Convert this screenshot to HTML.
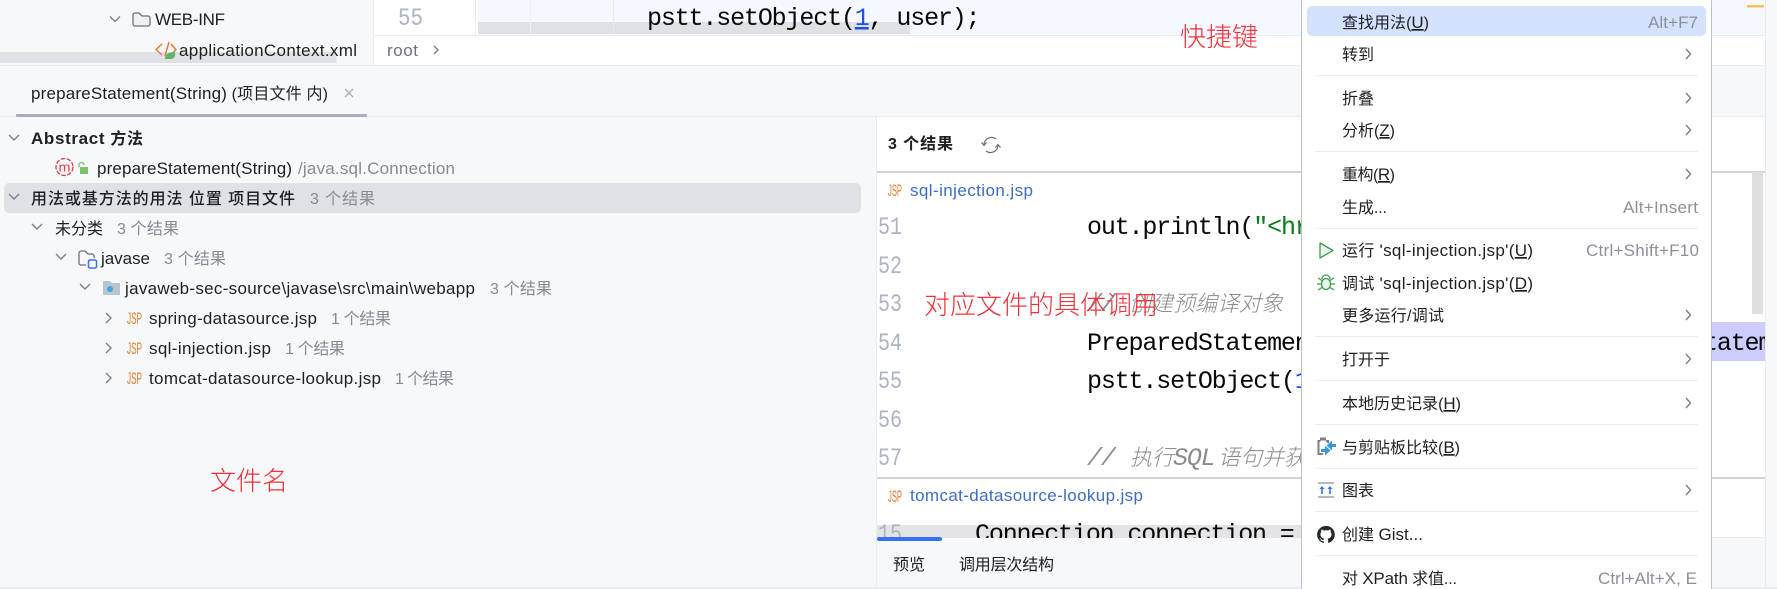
<!DOCTYPE html>
<html><head><meta charset="utf-8"><style>
html,body{margin:0;padding:0;background:#f7f8fa;width:1777px;height:589px;overflow:hidden}
svg{display:block}
text{font-family:"Liberation Sans","Noto Sans CJK SC",sans-serif;font-size:16px;fill:#1e1f22;white-space:pre}
.e{font-size:17px}
.g{fill:#868a91}
.s{fill:#8d909b;font-size:17px}
.b{font-weight:bold}
.m{font-family:"Liberation Mono","Noto Sans CJK SC",monospace;font-size:25px;fill:#080808;letter-spacing:-1.15px}
.n{font-family:"Liberation Mono",monospace;font-size:25px;fill:#aeb3c2}
.c{font-family:"Noto Sans CJK SC",sans-serif;font-size:22px;fill:#8c8c8c;font-style:italic;font-weight:300}
.cm{font-family:"Liberation Mono",monospace;font-size:25px;fill:#8c8c8c;font-style:italic;letter-spacing:-1.15px}
.r{font-family:"Noto Sans CJK SC",sans-serif;font-weight:300;fill:#f0303a;font-size:26px}
.j{font-size:17px;fill:#e8792c;font-weight:normal}
.l{fill:#3f6cc4}
.ch{fill:none;stroke:#7c7f88;stroke-width:1.4}
</style></head><body>
<svg width="1777" height="589" viewBox="0 0 1777 589" xmlns="http://www.w3.org/2000/svg">
<defs>
<clipPath id="c15"><rect x="877" y="515" width="425" height="23"/></clipPath>
</defs>
<rect width="1777" height="589" fill="#f7f8fa"/>
<!-- top editor -->
<rect x="374" y="0" width="1403" height="65" fill="#fff"/>
<rect x="478" y="0" width="1287" height="35" fill="#f5f8fe"/>
<rect x="373" y="0" width="1" height="65" fill="#ebecf0"/>
<rect x="475" y="0" width="1" height="35" fill="#ebecf0"/>
<rect x="374" y="35" width="1391" height="1" fill="#ebecf0"/>
<rect x="0" y="65" width="1777" height="1" fill="#ebecf0"/>
<rect x="0" y="52" width="337" height="11" fill="#dfe1e5"/>
<rect x="336" y="52" width="1" height="12" fill="#eceef1"/>
<rect x="478" y="22" width="432" height="12" fill="#dfe1e5"/>
<rect x="530" y="0" width="1" height="35" fill="#eef0f5"/>
<rect x="613" y="0" width="1" height="35" fill="#e6e9f0"/>
<path d="M110 16.500l5 5 5-5" class="ch"/>
<path d="M133 15a2 2 0 0 1 2-2h4l3 3h6a2 2 0 0 1 2 2v6a2 2 0 0 1-2 2h-13a2 2 0 0 1-2-2z" fill="#f0f1f3" stroke="#6c707e" stroke-width="1.3"/>
<text class="e" x="155" y="25" textLength="70">WEB-INF</text>
<path d="M162 44l-6 5.500 6 5.500M171 44l5 5.500-5 5.500" fill="none" stroke="#e8792c" stroke-width="1.400"/>
<path d="M169 42l-4 14" stroke="#e8792c" stroke-width="1.400"/>
<path d="M165 59q0-7 10-7q1 7-5 7z" fill="#62b36b"/>
<text class="e" x="179" y="56" textLength="178">applicationContext.xml</text>
<text class="n" x="398" y="25" textLength="25" lengthAdjust="spacingAndGlyphs">55</text>
<text class="m" x="647" y="25">pstt.setObject(<tspan fill="#1750eb" text-decoration="underline">1</tspan>, user);</text>
<text class="e" x="387" y="56" style="fill:#6c707e" textLength="31">root</text>
<path d="M434 46l4 4-4 4" class="ch" stroke-width="1"/>
<!-- tab -->
<text x="31" y="99" textLength="297"><tspan class="e">prepareStatement(String)</tspan> (项目文件 内)</text>
<path d="M345 89l8 8M353 89l-8 8" stroke="#a8adbd" stroke-width="1.300"/>
<rect x="0" y="116" width="1777" height="1" fill="#ebecf0"/>
<rect x="16" y="114" width="351" height="3" rx="1" fill="#a8adbd"/>
<!-- tree -->
<path d="M9 135l5 5 5-5" class="ch"/>
<text class="b" x="31" y="144" textLength="112"><tspan class="e">Abstract</tspan> 方法</text>
<circle cx="64.500" cy="167" r="8.500" fill="none" stroke="#db3b4b" stroke-width="1.300" stroke-dasharray="4.500 1.500"/>
<text x="58.500" y="171.500" style="fill:#db3b4b;font-size:13px" textLength="12" lengthAdjust="spacingAndGlyphs">m</text>
<rect x="80" y="167" width="8" height="7" fill="#7fc06d"/>
<path d="M79 167v-2a2.500 2.500 0 0 1 5 0" fill="none" stroke="#7fc06d" stroke-width="1.300"/>
<text class="e" x="97" y="174" textLength="195">prepareStatement(String)</text>
<text class="g e" x="298" y="174" textLength="157">/java.sql.Connection</text>
<rect x="4" y="183" width="857" height="30" rx="5" fill="#dfe1e5"/>
<path d="M9 194l5 5 5-5" class="ch"/>
<text x="31" y="204" textLength="264" style="font-weight:500">用法或基方法的用法 位置 项目文件</text>
<text class="g" x="310" y="204" textLength="65">3 个结果</text>
<path d="M32 224l5 5 5-5" class="ch"/>
<text x="55" y="234" textLength="48">未分类</text>
<text class="g" x="117" y="234" textLength="62">3 个结果</text>
<path d="M56 254l5 5 5-5" class="ch"/>
<path d="M79 253a2 2 0 0 1 2-2h4l3 3h4a2 2 0 0 1 2 2v2M86 265h-5a2 2 0 0 1-2-2v-10" fill="none" stroke="#6c707e" stroke-width="1.300"/>
<rect x="88.500" y="260" width="8" height="8" rx="1.500" fill="#fff" stroke="#3574f0" stroke-width="1.500"/>
<text class="e" x="101" y="264" textLength="49">javase</text>
<text class="g" x="164" y="264" textLength="62">3 个结果</text>
<path d="M80 284l5 5 5-5" class="ch"/>
<path d="M103 281h7l2 2h8v12h-17z" fill="#b8c5cd"/>
<circle cx="110" cy="289" r="3" fill="#3fa5e0"/>
<text class="e" x="125" y="294" textLength="350">javaweb-sec-source\javase\src\main\webapp</text>
<text class="g" x="490" y="294" textLength="62">3 个结果</text>
<path d="M106 313l5 5-5 5" class="ch"/>
<text class="j" x="127" y="324" textLength="15" lengthAdjust="spacingAndGlyphs">JSP</text>
<text class="e" x="149" y="324" textLength="168">spring-datasource.jsp</text>
<text class="g" x="331" y="324" textLength="60">1 个结果</text>
<path d="M106 343l5 5-5 5" class="ch"/>
<text class="j" x="127" y="354" textLength="15" lengthAdjust="spacingAndGlyphs">JSP</text>
<text class="e" x="149" y="354" textLength="122">sql-injection.jsp</text>
<text class="g" x="285" y="354" textLength="60">1 个结果</text>
<path d="M106 373l5 5-5 5" class="ch"/>
<text class="j" x="127" y="384" textLength="15" lengthAdjust="spacingAndGlyphs">JSP</text>
<text class="e" x="149" y="384" textLength="232">tomcat-datasource-lookup.jsp</text>
<text class="g" x="395" y="384" textLength="59">1 个结果</text>
<text class="r" x="210" y="490">文件名</text>
<!-- right panel -->
<rect x="877" y="117" width="900" height="420" fill="#fff"/>
<rect x="876" y="117" width="1" height="470" fill="#ebecf0"/>
<text class="b" x="888" y="149" textLength="65">3 个结果</text>
<path d="M984 145a7.500 7.500 0 0 1 12-6M998 145a7.500 7.500 0 0 1-12 6" fill="none" stroke="#6c707e" stroke-width="1.200"/>
<path d="M981.500 142.500l2.500 3 2.500-3M995.500 147.500l2.500-3 2.500 3" fill="none" stroke="#6c707e" stroke-width="1.200"/>
<rect x="877" y="171" width="900" height="2" fill="#d2d2d2"/>
<text class="j" x="888" y="196" textLength="14" lengthAdjust="spacingAndGlyphs">JSP</text>
<text class="l e" x="910" y="196" textLength="123">sql-injection.jsp</text>
<text class="n" x="878" y="234" textLength="24" lengthAdjust="spacingAndGlyphs">51</text>
<text class="n" x="878" y="273" textLength="24" lengthAdjust="spacingAndGlyphs">52</text>
<text class="n" x="878" y="311" textLength="24" lengthAdjust="spacingAndGlyphs">53</text>
<text class="n" x="878" y="350" textLength="24" lengthAdjust="spacingAndGlyphs">54</text>
<text class="n" x="878" y="388" textLength="24" lengthAdjust="spacingAndGlyphs">55</text>
<text class="n" x="878" y="427" textLength="24" lengthAdjust="spacingAndGlyphs">56</text>
<text class="n" x="878" y="465" textLength="24" lengthAdjust="spacingAndGlyphs">57</text>
<text class="m" x="1087" y="234">out.println(<tspan fill="#067d17">"&lt;hr&gt;</tspan></text>
<text class="cm" x="1087" y="311">//</text>
<text class="c" x="1129" y="311">创建预编译对象</text>
<text class="m" x="1087" y="350">PreparedStatement</text>
<text class="m" x="1087" y="388">pstt.setObject(<tspan fill="#1750eb">1</tspan></text>
<text class="cm" x="1087" y="465">//</text>
<text class="c" x="1130" y="465">执行</text>
<text class="cm" x="1173" y="465">SQL</text>
<text class="c" x="1218" y="465">语句并获</text>
<text class="r" x="924" y="314">对应文件的具体调用</text>
<rect x="1712" y="322" width="53" height="39" fill="#ccccff"/>
<text class="m" x="1703" y="350">tatem</text>
<rect x="877" y="477" width="900" height="2" fill="#d2d2d2"/>
<text class="j" x="888" y="502" textLength="14" lengthAdjust="spacingAndGlyphs">JSP</text>
<text class="l e" x="910" y="501" textLength="233">tomcat-datasource-lookup.jsp</text>
<rect x="877" y="525" width="425" height="13" fill="#e4e4e6"/>
<g clip-path="url(#c15)">
<text class="n" x="878" y="541" textLength="24" lengthAdjust="spacingAndGlyphs">15</text>
<text class="m" x="975" y="541">Connection connection =</text>
</g>
<rect x="877" y="538" width="900" height="49" fill="#f7f8fa"/>
<rect x="1712" y="537" width="53" height="1" fill="#ebecf0"/>
<rect x="877" y="537" width="65" height="4" rx="2" fill="#3574f0"/>
<text x="893" y="570" textLength="32">预览</text>
<text x="959" y="570" textLength="95">调用层次结构</text>
<rect x="1765" y="0" width="12" height="589" fill="#f7f8fa"/>
<rect x="1765" y="0" width="1" height="589" fill="#ebecf0"/>
<rect x="1747" y="5" width="17" height="2.500" fill="#f2c55c"/>
<rect x="1752" y="172" width="11" height="142" fill="#dfdfdf"/>
<!-- labels -->
<text class="r" x="1180" y="46">快捷键</text>
<rect x="0" y="587" width="1777" height="2" fill="#ebecf0"/>
<!-- menu -->
<rect x="1301.500" y="-2" width="410" height="595" fill="#fff" stroke="#bcc0cc"/>
<rect x="1307" y="6" width="399" height="30" rx="5" fill="#d4e2ff"/>
<g fill="#ebecf0">
<rect x="1315" y="75" width="383" height="1"/>
<rect x="1315" y="151" width="383" height="1"/>
<rect x="1315" y="228" width="383" height="1"/>
<rect x="1315" y="336" width="383" height="1"/>
<rect x="1315" y="380" width="383" height="1"/>
<rect x="1315" y="424" width="383" height="1"/>
<rect x="1315" y="468" width="383" height="1"/>
<rect x="1315" y="511" width="383" height="1"/>
<rect x="1315" y="555" width="383" height="1"/>
</g>
<text x="1342" y="28" textLength="87">查找用法(<tspan class="e" text-decoration="underline">U</tspan>)</text>
<text class="s" x="1648" y="28" textLength="50">Alt+F7</text>
<text x="1342" y="60">转到</text>
<text x="1342" y="104">折叠</text>
<text x="1342" y="136" textLength="53">分析(<tspan class="e" text-decoration="underline">Z</tspan>)</text>
<text x="1342" y="180" textLength="53">重构(<tspan class="e" text-decoration="underline">R</tspan>)</text>
<text x="1342" y="213" textLength="45">生成...</text>
<text class="s" x="1623" y="213" textLength="75">Alt+Insert</text>
<text x="1342" y="256" textLength="191">运行 <tspan class="e">'sql-injection.jsp'(<tspan text-decoration="underline">U</tspan>)</tspan></text>
<text class="s" x="1586" y="256" textLength="113">Ctrl+Shift+F10</text>
<text x="1342" y="289" textLength="191">调试 <tspan class="e">'sql-injection.jsp'(<tspan text-decoration="underline">D</tspan>)</tspan></text>
<text x="1342" y="321" textLength="102">更多运行/调试</text>
<text x="1342" y="365">打开于</text>
<text x="1342" y="409" textLength="119">本地历史记录(<tspan class="e" text-decoration="underline">H</tspan>)</text>
<text x="1342" y="453" textLength="118">与剪贴板比较(<tspan class="e" text-decoration="underline">B</tspan>)</text>
<text x="1342" y="496">图表</text>
<text x="1342" y="540" textLength="81">创建 <tspan class="e">Gist...</tspan></text>
<text x="1342" y="584" textLength="115">对 <tspan class="e">XPath</tspan> 求值...</text>
<text class="s" x="1598" y="584" textLength="99">Ctrl+Alt+X, E</text>
<g class="ch" fill="none" stroke="#7c7f88" stroke-width="1.200">
<path d="M1686 49l4.500 5-4.500 5"/>
<path d="M1686 93l4.500 5-4.500 5"/>
<path d="M1686 125l4.500 5-4.500 5"/>
<path d="M1686 169l4.500 5-4.500 5"/>
<path d="M1686 310l4.500 5-4.500 5"/>
<path d="M1686 354l4.500 5-4.500 5"/>
<path d="M1686 398l4.500 5-4.500 5"/>
<path d="M1686 485l4.500 5-4.500 5"/>
</g>
<!-- menu icons -->
<path d="M1320 243l13 7.500-13 7.500z" fill="#eaf5ec" stroke="#3d9a50" stroke-width="1.300" stroke-linejoin="round"/>
<g fill="none" stroke="#3d9a50" stroke-width="1.300">
<ellipse cx="1326" cy="284" rx="4.500" ry="5.500" fill="#eaf5ec"/>
<path d="M1322 279a4 4 0 0 1 8 0M1317 284h4.500M1330.500 284h4.500M1318 278l4 2.500M1334 278l-4 2.500M1318 290l4-2.500M1334 290l-4-2.500"/>
</g>
<path d="M1323 454h-4.500v-13h2M1326 441h2v2" fill="none" stroke="#7b7e86" stroke-width="2"/>
<rect x="1320" y="437.500" width="6" height="3" fill="#7b7e86"/>
<path d="M1336 446h-4v-3.500l-5.500 5 5.500 5v-3.500h4z" fill="#3d97dc" transform="translate(0,-2)"/>
<path d="M1321 449h4v-3.500l5.500 5-5.500 5v-3.500h-4z" fill="#3d97dc"/>
<path d="M1318 483h16M1318 497h16" stroke="#8d909b" stroke-width="1.300"/>
<path d="M1322 486l-2.500 3h1.700v5h1.600v-5h1.700zM1330 486l-2.500 3h1.700v5h1.600v-5h1.700z" fill="#3574f0"/>
<path d="M1326 526a8.700 8.700 0 0 0-2.800 17c.4.100.6-.2.600-.4v-1.500c-2.400.5-2.900-1.100-2.900-1.100-.4-1-1-1.300-1-1.300-.8-.5.100-.5.100-.5.900.1 1.300.9 1.300.9.800 1.300 2 1 2.500.7.100-.6.300-1 .6-1.200-1.900-.2-4-1-4-4.300 0-1 .3-1.700.9-2.300-.1-.2-.4-1.100.1-2.300 0 0 .7-.2 2.400.9a8.300 8.300 0 0 1 4.300 0c1.700-1.100 2.400-.9 2.400-.9.500 1.200.2 2.100.1 2.300.6.600.9 1.400.9 2.300 0 3.300-2 4.100-4 4.300.3.300.6.800.6 1.600v2.300c0 .2.200.5.600.4a8.700 8.700 0 0 0-2.800-17z" fill="#24292e"/>
</svg>
</body></html>
